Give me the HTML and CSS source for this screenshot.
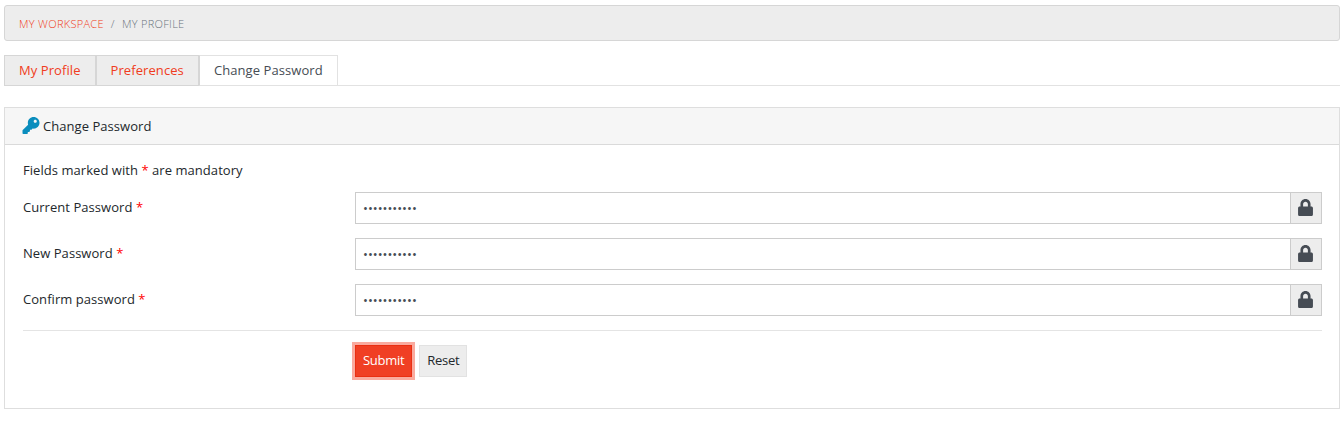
FILE: index.html
```html
<!DOCTYPE html>
<html lang="en">
<head>
    <meta charset="UTF-8">
    <meta name="viewport" content="width=device-width, initial-scale=1.0">
    <title>Change Password</title>
    <link rel="stylesheet" href="styles.css">
</head>
<body>
    <svg class="symbols">
        <symbol id="lock" viewBox="0 0 448 512">
            <path d="M400 224h-24v-72C376 68.200 307.800 0 224 0S72 68.200 72 152v72H48c-26.500 0-48 21.500-48 48v192c0 26.500 21.500 48 48 48h352c26.500 0 48-21.500 48-48V272c0-26.500-21.500-48-48-48zm-104 0H152v-72c0-39.700 32.300-72 72-72s72 32.300 72 72v72z"/>
        </symbol>
    </svg>

    <ol class="breadcrumb">
        <li><a href="#">My Workspace</a></li>
        <li class="active">My Profile</li>
    </ol>

    <ul class="tabs">
        <li><a href="#">My Profile</a></li>
        <li><a href="#">Preferences</a></li>
        <li class="active"><a href="#">Change Password</a></li>
    </ul>

    <div class="card">
        <div class="card_header">
            <svg class="icon_key" viewBox="0 0 512 512">
                <path d="M512 176.001C512 273.203 433.202 352 336 352c-11.220 0-22.190-1.062-32.827-3.069l-24.012 27.014A23.999 23.999 0 0 1 261.223 384H224v40c0 13.255-10.745 24-24 24h-40v40c0 13.255-10.745 24-24 24H24c-13.255 0-24-10.745-24-24v-78.059c0-6.365 2.529-12.470 7.029-16.971l161.802-161.802C163.108 213.814 160 195.271 160 176 160 78.798 238.797 0 336 0 433.488 0 512 78.511 512 176.001zM336 128c0 26.510 21.490 48 48 48s48-21.490 48-48-21.490-48-48-48-48 21.490-48 48z"/>
            </svg>
            <span>Change Password</span>
        </div>
        <form class="card_body">
            <p class="note">Fields marked with <span class="req">*</span> are mandatory</p>
            <div class="form_row">
                <label for="current">Current Password <span class="req">*</span></label>
                <div class="input_group">
                    <input type="password" id="current" value="password123">
                    <span class="addon"><svg><use href="#lock"/></svg></span>
                </div>
            </div>
            <div class="form_row">
                <label for="new">New Password <span class="req">*</span></label>
                <div class="input_group">
                    <input type="password" id="new" value="password456">
                    <span class="addon"><svg><use href="#lock"/></svg></span>
                </div>
            </div>
            <div class="form_row">
                <label for="confirm">Confirm password <span class="req">*</span></label>
                <div class="input_group">
                    <input type="password" id="confirm" value="password456">
                    <span class="addon"><svg><use href="#lock"/></svg></span>
                </div>
            </div>
            <div class="buttons">
                <button type="button" class="btn btn_submit">Submit</button>
                <button type="reset" class="btn">Reset</button>
            </div>
        </form>
    </div>
</body>
</html>
```
FILE: styles.css
```css
* { margin: 0; padding: 0; box-sizing: border-box; }
body {
    padding: 5px 4px 0;
    font: 13px/20px "Open Sans", sans-serif;
    letter-spacing: 0.05px;
    color: #23282c;
    background: #fff;
}
li { list-style: none; }
a { color: #f03c20; text-decoration: none; }
.symbols { display: none; }
.req { color: #f00; }

.breadcrumb {
    display: flex;
    height: 36px;
    padding: 0 14px;
    border: 1px solid #d6d6d6;
    border-radius: 3px;
    background: #ededed;
    font-size: 11px;
    font-weight: 300;
    line-height: 36px;
    letter-spacing: 0.3px;
    text-transform: uppercase;
    color: #6c757d;
}
.breadcrumb li + li::before {
    content: "/";
    padding: 0 7px;
}

.tabs {
    display: flex;
    height: 31px;
    margin-top: 14px;
    border-bottom: 1px solid #e2e2e2;
    letter-spacing: 0.08px;
}
.tabs a {
    display: block;
    height: 31px;
    padding: 0 14px;
    border: 1px solid #d6d6d6;
    background: #ededed;
    line-height: 29px;
}
.tabs .active a {
    border-color: #e2e2e2;
    border-left-color: #d6d6d6;
    background: #fff;
    color: #464c54;
}

.card {
    height: 302px;
    margin-top: 21px;
    border: 1px solid #dedede;
}
.card_header {
    display: flex;
    align-items: center;
    gap: 3px;
    height: 37px;
    padding: 0 17px;
    border-bottom: 1px solid #dadada;
    background: #f6f6f6;
}
.icon_key {
    width: 18px;
    height: 17px;
    margin-bottom: 1px;
    fill: #0a8dbd;
}
.card_body { padding: 15px 17px 0 18px; }
.note { margin-bottom: 12px; }

.form_row {
    display: flex;
    margin-bottom: 14px;
}
.form_row label {
    width: 332px;
    line-height: 31px;
}
.input_group {
    display: flex;
    flex: 1;
    height: 32px;
}
.input_group input {
    flex: 1;
    padding: 0 7px;
    border: 1px solid #ccc;
    border-right: 0;
    outline: 0;
    font: inherit;
    color: #464c54;
}
.addon {
    display: flex;
    align-items: center;
    justify-content: center;
    width: 32px;
    padding: 0 1px 1px 0;
    border: 1px solid #ccc;
    background: #ededed;
}
.addon svg {
    width: 15px;
    height: 17px;
    fill: #464c54;
}

.buttons {
    display: flex;
    gap: 7px;
    padding: 14px 0 0 332px;
    border-top: 1px solid #e4e4e4;
}
.btn {
    height: 32px;
    padding: 0 7px 2px;
    border: 1px solid #e2e2e2;
    background: #ededed;
    font: inherit;
    letter-spacing: -0.28px;
    color: #23282c;
}
.btn_submit {
    border-color: #e92f12;
    background: #f03f24;
    box-shadow: 0 0 0 3px #faaa9e;
    color: #fff;
}
```
